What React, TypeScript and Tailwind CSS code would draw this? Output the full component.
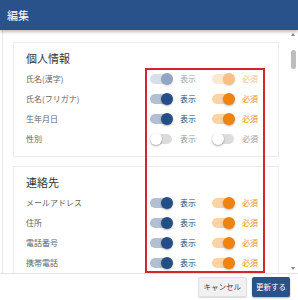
import React from "react";

type Row = { label: string; show: boolean; required: boolean; disabled?: boolean };

const sections: { title: string; rows: Row[] }[] = [
  {
    title: "個人情報",
    rows: [
      { label: "氏名(漢字)", show: true, required: true, disabled: true },
      { label: "氏名(フリガナ)", show: true, required: true },
      { label: "生年月日", show: true, required: true },
      { label: "性別", show: false, required: false },
    ],
  },
  {
    title: "連絡先",
    rows: [
      { label: "メールアドレス", show: true, required: true },
      { label: "住所", show: true, required: true },
      { label: "電話番号", show: true, required: true },
      { label: "携帯電話", show: true, required: true },
    ],
  },
];

function Toggle({ on, color, disabled }: { on: boolean; color: "blue" | "orange"; disabled?: boolean }) {
  const track = !on
    ? "bg-[#dcdcdc]"
    : color === "blue"
      ? "bg-[#b3c0d3]"
      : "bg-[#fcd3a6]";
  const thumb = !on
    ? "bg-white left-0 shadow-[0_1px_2px_rgba(0,0,0,0.35)]"
    : color === "blue"
      ? "bg-[#234f86] right-[-1px] shadow-[0_1px_2px_rgba(0,0,0,0.3)]"
      : "bg-[#f0820e] right-[-1px] shadow-[0_1px_2px_rgba(0,0,0,0.3)]";
  return (
    <div className={`relative w-[22px] h-[12px] flex items-center ${disabled ? "opacity-50" : ""}`}>
      <div className={`w-[22px] h-[10px] rounded-full ${track}`} />
      <div className={`absolute top-0 w-[12px] h-[12px] rounded-full ${thumb}`} />
    </div>
  );
}

function FieldRow({ row }: { row: Row }) {
  const showText = row.disabled
    ? "text-[#9aa6b8]"
    : row.show
      ? "text-[#2b4a75]"
      : "text-[#9a9a9a]";
  const reqText = row.disabled
    ? "text-[#f3c48f]"
    : row.required
      ? "text-[#e8921f]"
      : "text-[#9a9a9a]";
  return (
    <div className="h-[20px] flex items-center">
      <div className="w-[124px] text-[8px] text-[#666]">{row.label}</div>
      <Toggle on={row.show} color="blue" disabled={row.disabled} />
      <div className={`ml-[8px] w-[32px] text-[8px] ${showText}`}>表示</div>
      <Toggle on={row.required} color="orange" disabled={row.disabled} />
      <div className={`ml-[8px] text-[8px] ${reqText}`}>必須</div>
    </div>
  );
}

export default function App() {
  return (
    <div
      className="relative w-[298px] h-[300px] overflow-hidden bg-white flex flex-col"
      style={{ fontFamily: '"Noto Sans CJK JP", "Noto Sans", sans-serif' }}
    >
      <div className="h-[30px] shrink-0 bg-[#29518a] px-[7px] flex items-center text-white text-[11px] shadow-[0_2px_3px_rgba(0,0,0,0.25)] z-10">
        編集
      </div>

      <div className="flex-1 flex min-h-0 border-l border-[#e6e6e6] ml-[2px]">
        <div className="flex-1 overflow-hidden pl-[10px] pr-[10px] pt-[12px] flex flex-col gap-[9px]">
          {sections.map((s) => (
            <div key={s.title} className="shrink-0 border border-[#ececec] pl-[12px] pt-[6px] pb-[7px]">
              <div className="h-[18px] flex items-center text-[11px] text-[#333] mb-[2px]">{s.title}</div>
              {s.rows.map((r) => (
                <FieldRow key={r.label} row={r} />
              ))}
            </div>
          ))}
        </div>
        <div className="w-[8px] shrink-0 flex flex-col items-center pt-[3px] pb-[3px] mr-[1px]">
          <div className="w-0 h-0 border-l-[2.5px] border-r-[2.5px] border-b-[3px] border-l-transparent border-r-transparent border-b-[#888]" />
          <div className="mt-[14px] w-[5px] h-[19px] rounded-full bg-[#bdbdbd]" />
          <div className="flex-1" />
          <div className="w-0 h-0 border-l-[2.5px] border-r-[2.5px] border-t-[3px] border-l-transparent border-r-transparent border-t-[#888]" />
        </div>
      </div>

      <div className="h-[27px] shrink-0 border-t border-[#e4e4e4] flex justify-end items-start pt-[3px] pr-[8px] gap-[5px]">
        <button className="h-[20px] px-[5px] rounded-[2px] bg-[#f1f1f1] border border-[#e0e0e0] text-[7.5px] text-[#444] shadow-[0_1px_1px_rgba(0,0,0,0.15)]">
          キャンセル
        </button>
        <button className="h-[20px] px-[4px] rounded-[2px] bg-[#29518a] text-[7.5px] text-white shadow-[0_1px_2px_rgba(0,0,0,0.3)]">
          更新する
        </button>
      </div>

      <div className="absolute left-[145px] top-[68px] w-[120px] h-[205px] border-2 border-[#d3252b] pointer-events-none" />
    </div>
  );
}
